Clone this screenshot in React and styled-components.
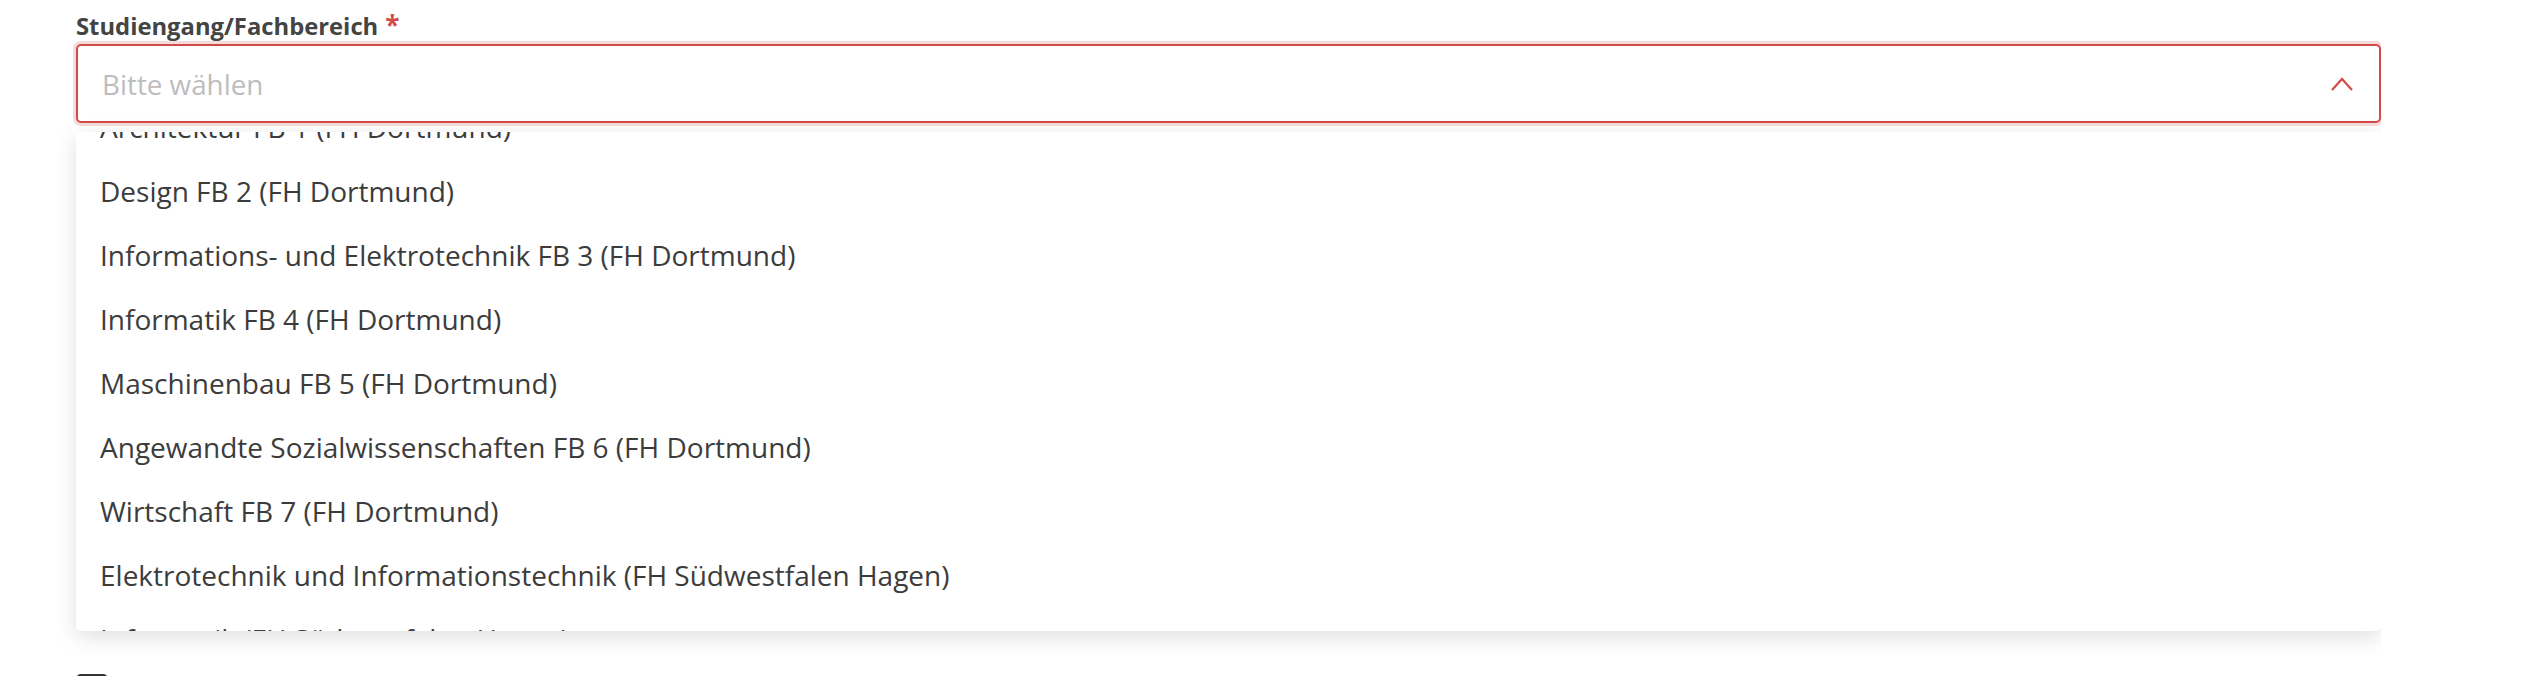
import React, { useLayoutEffect, useRef } from "react";
import styled, { createGlobalStyle } from "styled-components";

const GlobalStyle = createGlobalStyle`
  body {
    margin: 0;
    background: #fff;
    font-family: "Open Sans", "Liberation Sans", sans-serif;
    color: #3c3c3c;
  }
`;

const Page = styled.div`
  width: 2305px;
  padding: 10px 0 0 76px;
  height: 666px;
  overflow: hidden;
`;

const Field = styled.div`
  position: relative;
  margin-bottom: ${(p) => p.$gap || 85}px;
`;

const Label = styled.label`
  display: block;
  font-size: 23.8px;
  line-height: 30px;
  font-weight: 700;
  color: #444;
  margin-bottom: 3px;
`;

const Required = styled.span`
  color: #d24b4b;
  margin-left: 7px;
  font-size: 26px;
`;

const SelectBox = styled.div`
  box-sizing: border-box;
  height: 79px;
  display: flex;
  align-items: center;
  justify-content: space-between;
  padding: 0 26px 0 24px;
  border: 2px solid ${(p) => (p.$error ? "#d24b4b" : "#d6d6d6")};
  border-radius: 5px;
  background: #fff;
  box-shadow: ${(p) => (p.$error ? "0 0 0 3px rgba(210, 75, 75, 0.2)" : "none")};
`;

const Placeholder = styled.span`
  font-size: 27.8px;
  color: #bdbdbd;
`;

const Chevron = styled.svg`
  width: 22px;
  height: 14px;
  flex: none;
`;

const Dropdown = styled.ul`
  position: absolute;
  z-index: 10;
  top: 122px;
  left: 0;
  right: 0;
  height: 499px;
  margin: 0;
  padding: 0;
  list-style: none;
  background: #fff;
  border-radius: 5px;
  box-shadow: 0 6px 22px rgba(0, 0, 0, 0.13);
  overflow-y: auto;
  scrollbar-width: none;
  &::-webkit-scrollbar {
    display: none;
  }
`;

const Option = styled.li`
  height: 64px;
  display: flex;
  align-items: center;
  padding: 0 24px;
  font-size: 28px;
  color: #3c3c3c;
  white-space: nowrap;
`;

const CheckRow = styled.div`
  display: flex;
  align-items: center;
  gap: 16px;
`;

const Checkbox = styled.span`
  box-sizing: border-box;
  width: 32px;
  height: 32px;
  border: 2px solid #333;
  border-radius: 5px;
  flex: none;
`;

const options = [
  "Architektur FB 1 (FH Dortmund)",
  "Design FB 2 (FH Dortmund)",
  "Informations- und Elektrotechnik FB 3 (FH Dortmund)",
  "Informatik FB 4 (FH Dortmund)",
  "Maschinenbau FB 5 (FH Dortmund)",
  "Angewandte Sozialwissenschaften FB 6 (FH Dortmund)",
  "Wirtschaft FB 7 (FH Dortmund)",
  "Elektrotechnik und Informationstechnik (FH Südwestfalen Hagen)",
  "Informatik (FH Südwestfalen Hagen)",
  "Maschinenbau (FH Südwestfalen Iserlohn)",
  "Sonstiges",
];

function App() {
  const listRef = useRef(null);

  useLayoutEffect(() => {
    if (listRef.current) listRef.current.scrollTop = 37;
  }, []);

  return (
    <>
      <GlobalStyle />
      <Page>
        <Field>
          <Label>
            Studiengang/Fachbereich<Required>*</Required>
          </Label>
          <SelectBox $error>
            <Placeholder>Bitte wählen</Placeholder>
            <Chevron viewBox="0 0 22 14">
              <path d="M1 13 L11 2 L21 13" fill="none" stroke="#d24b4b" strokeWidth="2.2" />
            </Chevron>
          </SelectBox>
          <Dropdown ref={listRef}>
            {options.map((o) => (
              <Option key={o}>{o}</Option>
            ))}
          </Dropdown>
        </Field>
        <Field $gap={354}>
          <Label>Semester</Label>
          <SelectBox>
            <Placeholder>Bitte wählen</Placeholder>
          </SelectBox>
        </Field>
        <CheckRow>
          <Checkbox />
        </CheckRow>
      </Page>
    </>
  );
}

export default App;
